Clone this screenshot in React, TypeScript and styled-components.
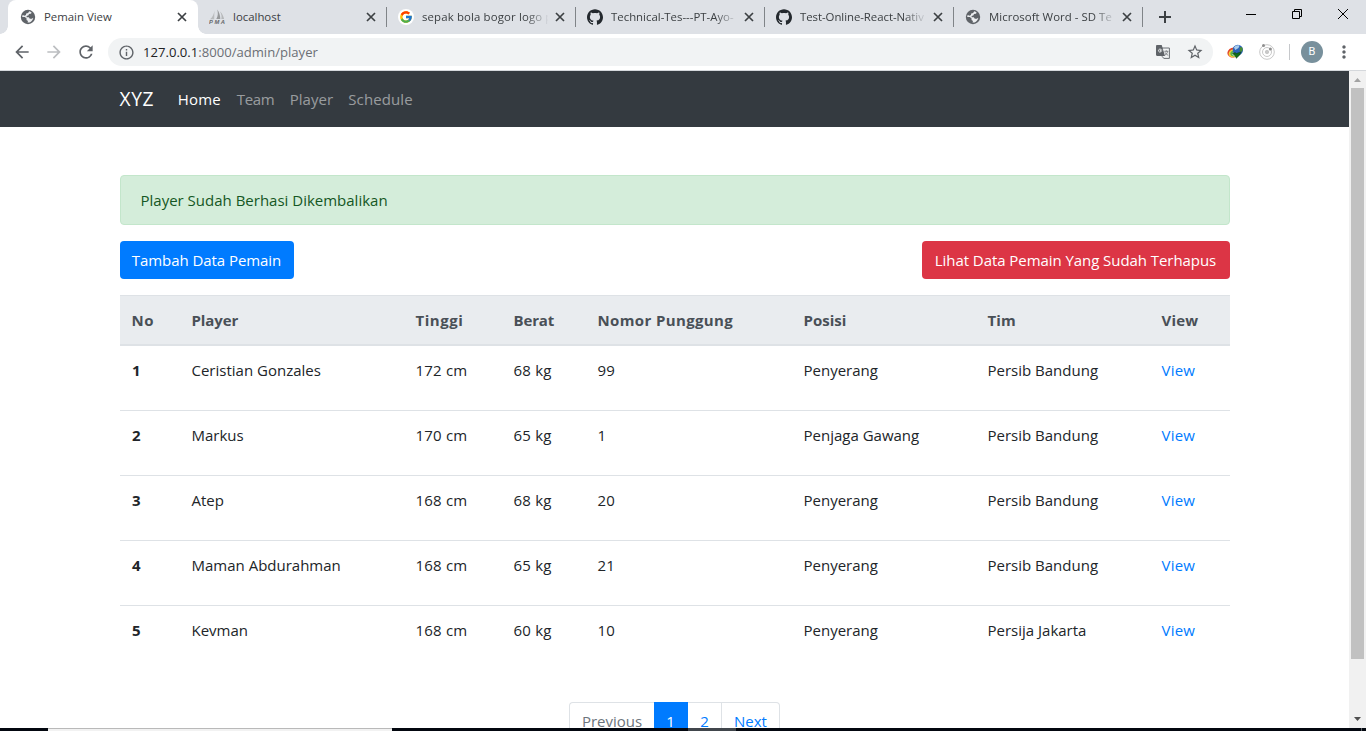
import React from 'react';
import styled, { createGlobalStyle, css } from 'styled-components';
import { MdArrowBack, MdArrowForward, MdRefresh, MdInfoOutline, MdStarBorder, MdMoreVert } from 'react-icons/md';
import { FcGoogle } from 'react-icons/fc';
import { SiGithub } from 'react-icons/si';

const GlobalStyle = createGlobalStyle`
  *, *::before, *::after { box-sizing: border-box; }
  html, body { margin: 0; overflow: hidden; background: #fff; }
  body { font-family: "Open Sans", "Noto Sans", sans-serif; font-size: 15px; line-height: 24px; color: #212529; }
  a { text-decoration: none; color: #007bff; }
  svg { display: block; flex: none; }
`;

const Screen = styled.div`
  display: flex;
  flex-direction: column;
  width: 1366px;
  height: 731px;
  overflow: hidden;
`;

/* Browser frame */
const TabStrip = styled.div`
  display: flex;
  height: 34px;
  padding-left: 8px;
  background: #dee1e6;
  flex: none;
`;

const TabBox = styled.div<{ $active?: boolean; $divider?: boolean }>`
  position: relative;
  display: flex;
  align-items: center;
  width: 189px;
  height: 34px;
  padding: 0 10px 0 12px;
  font-size: 11.4px;
  line-height: 16px;
  color: #3c4043;
  ${p => p.$active && css`
    z-index: 1;
    width: 190px;
    margin-right: -1px;
    background: #fff;
    border-radius: 8px 8px 0 0;
    &::before, &::after {
      content: "";
      position: absolute;
      bottom: 0;
      width: 8px;
      height: 8px;
    }
    &::before { left: -8px; background: radial-gradient(circle at 0 0, transparent 7.5px, #fff 8px); }
    &::after { right: -8px; background: radial-gradient(circle at 100% 0, transparent 7.5px, #fff 8px); }
  `}
  ${p => p.$divider && css`
    &::after {
      content: "";
      position: absolute;
      right: -1px;
      top: 7px;
      width: 1px;
      height: 20px;
      background: #808488;
    }
  `}
`;

const Favicon = styled.span`
  display: flex;
  width: 16px;
  height: 16px;
  flex: none;
  align-items: center;
  justify-content: center;
`;

const GoogleDisc = styled.span`
  display: flex;
  align-items: center;
  justify-content: center;
  flex: none;
  width: 16px;
  height: 16px;
  border-radius: 50%;
  background: #fff;
`;

const TabTitle = styled.span<{ $fade?: boolean; $spacing: number }>`
  flex: none;
  width: 126px;
  margin: 0 7px 0 8px;
  overflow: hidden;
  white-space: nowrap;
  letter-spacing: ${p => p.$spacing}px;
  ${p => p.$fade && css`mask-image: linear-gradient(90deg, #000 104px, transparent 127px);`}
`;

const NewTab = styled.div`
  display: flex;
  align-items: center;
  padding-left: 17px;
`;

const WindowControls = styled.div`
  display: flex;
  margin-left: auto;
  padding: 8px 17px 0 0;
  gap: 34px;
`;

const Toolbar = styled.div`
  display: flex;
  align-items: center;
  flex: none;
  height: 37px;
  padding: 0 12px;
  background: #fff;
  border-bottom: 1px solid #d5d8dc;
  color: #5f6368;
`;

const NavButtons = styled.div`
  display: flex;
  flex: none;
  gap: 12px;
  width: 96px;
`;

const AddressBar = styled.div`
  display: flex;
  align-items: center;
  flex: none;
  width: 1105px;
  height: 28px;
  padding: 0 9px 0 10px;
  border-radius: 14px;
  background: #f1f3f4;
  svg:nth-of-type(2) { margin: 0 16px 0 auto; }
`;

const Url = styled.span`
  margin-left: 8px;
  font-size: 13.1px;
  line-height: 20px;
  color: #6b6f74;
  b { font-weight: 400; color: #202124; }
`;

const Extensions = styled.div`
  display: flex;
  flex: none;
  align-items: center;
  margin-left: 13.5px;
`;

const OrbitSlot = styled.span`
  margin-left: 15.5px;
`;

const Separator = styled.span`
  width: 1px;
  height: 16px;
  margin: 0 11px 0 14px;
  background: #c6c8cb;
`;

const Avatar = styled.span`
  width: 22px;
  height: 22px;
  margin-right: 11px;
  border-radius: 50%;
  background: #78909c;
  color: #fff;
  font: 11px/22px Roboto, sans-serif;
  text-align: center;
`;

/* Page */
const Viewport = styled.div`
  display: flex;
  height: 657px;
  flex: none;
  overflow: hidden;
`;

const Page = styled.div`
  width: 1349px;
  height: 657px;
  overflow: hidden;
  background: #fff;
`;

const Navbar = styled.nav`
  display: flex;
  align-items: center;
  height: 56px;
  padding: 0 119.5px;
  background: #343a40;
`;

const Brand = styled.a`
  width: 58.3px;
  font-size: 19.2px;
  letter-spacing: 0.6px;
  line-height: 30px;
  color: #fff;
`;

const NavLink = styled.a<{ $active?: boolean; $width: number; $spacing?: number }>`
  width: ${p => p.$width}px;
  padding-bottom: 1px;
  letter-spacing: ${p => p.$spacing ?? 0}px;
  color: ${p => (p.$active ? '#fff' : 'rgba(255, 255, 255, 0.5)')};
`;

const Container = styled.main`
  width: 1110px;
  margin: 0 auto;
  padding-top: 48px;
`;

const Alert = styled.div`
  height: 50px;
  padding: 12px 20px;
  border: 1px solid #c3e6cb;
  border-radius: 4px;
  background: #d4edda;
  color: #155724;
`;

const Actions = styled.div`
  display: flex;
  justify-content: space-between;
  margin: 16px 0;
`;

const Button = styled.a<{ $color: string; $width: number }>`
  width: ${p => p.$width}px;
  height: 38px;
  padding: 7px 0;
  border-radius: 4px;
  background: ${p => p.$color};
  color: #fff;
  letter-spacing: -0.06px;
  text-align: center;
  white-space: nowrap;
`;

const Table = styled.table`
  width: 1110px;
  table-layout: fixed;
  border-collapse: separate;
  border-spacing: 0;
  text-align: left;
`;

const HeadCell = styled.th<{ $width: number; $spacing: number }>`
  width: ${p => p.$width}px;
  height: 51px;
  padding: 0 12px;
  border-top: 1px solid #dee2e6;
  border-bottom: 2px solid #dee2e6;
  background: #e9ecef;
  color: #495057;
  letter-spacing: ${p => p.$spacing}px;
  white-space: nowrap;
`;

const Row = styled.tr`
  & > * {
    height: 65px;
    padding: 12px 12px 28px;
    border-top: 1px solid #dee2e6;
    vertical-align: top;
  }
  & > th { padding-left: 12.5px; }
  &:first-child > * { height: 64px; border-top: 0; }
`;

const Cell = styled.td<{ $numeric?: boolean }>`
  letter-spacing: ${p => (p.$numeric ? 0.2 : 0)}px;
`;

const Pagination = styled.div`
  display: flex;
  width: 211px;
  margin: 32px auto 0;
`;

const PageItem = styled.a<{ $width: number; $state?: 'active' | 'disabled' }>`
  width: ${p => p.$width}px;
  height: 38px;
  padding-top: 6px;
  border: 1px solid #dee2e6;
  border-left-width: 0;
  text-align: center;
  &:first-child { border-left-width: 1px; border-radius: 4px 0 0 4px; }
  &:last-child { border-radius: 0 4px 4px 0; }
  ${p => p.$state === 'disabled' && css`color: #6c757d; border-right: 0;`}
  ${p => p.$state === 'active' && css`color: #fff; background: #007bff; border-color: #007bff;`}
`;

const Scrollbar = styled.div`
  display: flex;
  flex-direction: column;
  align-items: center;
  width: 17px;
  padding: 7px 0 7px;
  background: #f1f1f1;
`;

const Thumb = styled.div`
  width: 13px;
  height: 571px;
  margin: 6px 0 auto;
  background: #c1c1c1;
`;

/* Taskbar edge */
const Taskbar = styled.div`
  display: flex;
  flex: none;
  height: 3px;
  background: #03070f;
`;

const TaskSearch = styled.div`
  width: 344px;
  margin-left: 48px;
  border-top: 1px solid #b9b9b9;
  background: #f2f2f2;
`;

const TaskActive = styled.div`
  width: 48px;
  margin-left: 296px;
  background: #41464c;
`;

const TaskDesktop = styled.div`
  width: 1px;
  margin-left: auto;
  margin-right: 4px;
  background: #5c6066;
`;

const Globe = () => (
  <svg width="16" height="16" viewBox="0 0 16 16">
    <circle cx="8" cy="8" r="7.2" fill="#5f6368" />
    <path d="M9.200 2.300c1 .2 1.800.700 2.500 1.400l-.9 1-1.900.2-.3 1.400-1.900.6-.2 1.400h2.300l1 1.500h2l1.500-1c-.3 2.200-1.700 3.900-3.800 4.600l-2 .1.500-1.500-1.500-.9.100-1.500-1.700-1.500L2.200 8c0-.8.200-1.500.5-2.100l2 .8 1.200-.8.300-1.500 1.900-.4z" fill="#eceef0" />
  </svg>
);

const PmaSail = () => (
  <svg width="17" height="16" viewBox="0 0 17 16">
    <path d="M5.400 1.500C5 5 3.800 8 1 10.300h4.200z" fill="#b9bbbd" />
    <path d="M8.200.5c1 3.500.9 6.500-.9 9.600h4C11.300 6.500 10.200 3 8.200.5z" fill="#97999b" />
    <path d="M11 2.500c1.500 2.500 2 5 1.300 7.600h2.800C14.500 7 13.200 4.500 11 2.500z" fill="#b5b7b9" />
    <text x="0" y="15" fontFamily="Liberation Sans" fontSize="5.800" fontWeight="700" fontStyle="italic" fill="#66686a" textLength="16">PMA</text>
  </svg>
);

const Close = () => (
  <svg width="10" height="10" viewBox="0 0 10 10" stroke="#3c4043" strokeWidth="1.700">
    <path d="M1 1l8 8M9 1l-8 8" />
  </svg>
);

const Translate = () => (
  <svg width="14" height="14" viewBox="0 0 14 14">
    <path d="M6 3h7.400v10.400H8L5.500 11z" fill="#f1f3f4" stroke="#6b6f74" strokeWidth="1" />
    <path d="M0 1.200C0 .5.500 0 1.200 0h4.500l3.300 11H1.200C.5 11 0 10.500 0 9.800z" fill="#5f6368" />
    <path d="M6.300 5H4.300v1.100h1c-.2.700-.7 1-1.300 1a1.500 1.500 0 1 1 1-2.600" fill="none" stroke="#f1f3f4" strokeWidth=".9" />
    <path d="M8.300 6.300h4M10.300 5.300v1M11.700 6.400c-.5 1.800-1.500 3-2.800 3.800M9 7.300c.7 1.400 1.700 2.400 3.200 3" fill="none" stroke="#6b6f74" strokeWidth=".8" />
  </svg>
);

const DownloadGlobe = () => (
  <svg width="17" height="16" viewBox="0 0 17 16">
    <ellipse cx="6.200" cy="8.600" rx="5.800" ry="4.900" fill="#e2432c" transform="rotate(-20 6 8.800)" />
    <ellipse cx="6.500" cy="9.200" rx="5" ry="4" fill="#f5d13a" transform="rotate(-20 6.500 9.200)" />
    <ellipse cx="7" cy="9.600" rx="3.700" ry="2.900" fill="#5db548" />
    <ellipse cx="7.500" cy="10" rx="2.200" ry="1.800" fill="#e8f3e4" />
    <circle cx="10.800" cy="6" r="5.200" fill="#2c62b8" />
    <path d="M7 3.500c1.200-2 3.500-2.600 5.500-1.900L11.500 4 8.300 6z" fill="#a9cdec" />
    <path d="M13 3l2.300.5c.6 1.700.3 3.400-.6 4.600L12.500 7z" fill="#488d35" />
    <path d="M5.500 9.500 8.300 8.600l.9.900 4.800-1.600-1.200 3L9.300 14.300 8.400 12z" fill="#116d18" stroke="#073f0b" strokeWidth=".5" />
  </svg>
);

const Orbit = () => (
  <svg width="16" height="16" viewBox="0 0 16 16" fill="none" stroke="#c8c8c8">
    <circle cx="8" cy="8" r="7.300" />
    <circle cx="8" cy="8" r="4.500" />
    <circle cx="8" cy="8" r="1.700" fill="#c8c8c8" />
    <circle cx="4.500" cy="1.600" r="1.500" fill="#8e8e8e" stroke="none" />
    <circle cx="11.400" cy="5" r="1.500" fill="#8e8e8e" stroke="none" />
  </svg>
);

type TabData = { title: string; icon: React.ReactNode; spacing: number; fade?: boolean };
const tabs: TabData[] = [
  { title: 'Pemain View', icon: <Globe />, spacing: 0 },
  { title: 'localhost', icon: <PmaSail />, spacing: 0 },
  { title: 'sepak bola bogor logo p', icon: <GoogleDisc><FcGoogle size={14} /></GoogleDisc>, spacing: 0.14, fade: true },
  { title: 'Technical-Tes---PT-Ayo-', icon: <SiGithub size={16} color="#24292e" />, spacing: 0, fade: true },
  { title: 'Test-Online-React-Nativ', icon: <SiGithub size={16} color="#24292e" />, spacing: -0.05, fade: true },
  { title: 'Microsoft Word - SD Te', icon: <Globe />, spacing: 0.04, fade: true },
];

const columns: [string, number, number][] = [
  ['No', 60, 0.5], ['Player', 224, -0.1], ['Tinggi', 98, 0.55], ['Berat', 84, -0.15],
  ['Nomor Punggung', 206, 0.37], ['Posisi', 184, 0], ['Tim', 174, 0.15], ['View', 80, 0.15],
];

const players = [
  ['Ceristian Gonzales', '172 cm', '68 kg', '99', 'Penyerang', 'Persib Bandung'],
  ['Markus', '170 cm', '65 kg', '1', 'Penjaga Gawang', 'Persib Bandung'],
  ['Atep', '168 cm', '68 kg', '20', 'Penyerang', 'Persib Bandung'],
  ['Maman Abdurahman', '168 cm', '65 kg', '21', 'Penyerang', 'Persib Bandung'],
  ['Kevman', '168 cm', '60 kg', '10', 'Penyerang', 'Persija Jakarta'],
];

export default function App() {
  return (
    <Screen>
      <GlobalStyle />
      <TabStrip>
        {tabs.map((tab, i) => (
          <TabBox key={tab.title} $active={i === 0} $divider={i > 0}>
            <Favicon>{tab.icon}</Favicon>
            <TabTitle $fade={tab.fade} $spacing={tab.spacing}>{tab.title}</TabTitle>
            <Close />
          </TabBox>
        ))}
        <NewTab>
          <svg width="12" height="12" viewBox="0 0 12 12" stroke="#3c4043" strokeWidth="2"><path d="M6 0v12M0 6h12" /></svg>
        </NewTab>
        <WindowControls>
          <svg width="12" height="12" viewBox="0 0 12 12" stroke="#000"><path d="M1 6.500h10" /></svg>
          <svg width="12" height="12" viewBox="0 0 12 12" stroke="#000" fill="none"><path d="M1.500 3.500h7v7h-7zM3.500 3.500v-2h7v7h-2" /></svg>
          <svg width="12" height="12" viewBox="0 0 12 12" stroke="#000"><path d="M1 1l10 10M11 1L1 11" /></svg>
        </WindowControls>
      </TabStrip>
      <Toolbar>
        <NavButtons>
          <MdArrowBack size={20} />
          <MdArrowForward size={20} color="#bcbec1" />
          <MdRefresh size={20} />
        </NavButtons>
        <AddressBar>
          <MdInfoOutline size={17} />
          <Url><b>127.0.0.1</b>:8000/admin/player</Url>
          <Translate />
          <MdStarBorder size={18} />
        </AddressBar>
        <Extensions>
          <DownloadGlobe />
          <OrbitSlot><Orbit /></OrbitSlot>
          <Separator />
          <Avatar>B</Avatar>
          <MdMoreVert size={20} />
        </Extensions>
      </Toolbar>
      <Viewport>
        <Page>
          <Navbar>
            <Brand>XYZ</Brand>
            <NavLink $active $width={59} $spacing={0.2}>Home</NavLink>
            <NavLink $width={53} $spacing={-0.35}>Team</NavLink>
            <NavLink $width={58.5}>Player</NavLink>
            <NavLink $width={80} $spacing={0.1}>Schedule</NavLink>
          </Navbar>
          <Container>
            <Alert>Player Sudah Berhasi Dikembalikan</Alert>
            <Actions>
              <Button $color="#007bff" $width={174}>Tambah Data Pemain</Button>
              <Button $color="#dc3545" $width={308}>Lihat Data Pemain Yang Sudah Terhapus</Button>
            </Actions>
            <Table>
              <thead>
                <tr>
                  {columns.map(([label, width, spacing]) => (
                    <HeadCell key={label} $width={width} $spacing={spacing}>{label}</HeadCell>
                  ))}
                </tr>
              </thead>
              <tbody>
                {players.map((cells, i) => (
                  <Row key={cells[0]}>
                    <th>{i + 1}</th>
                    {cells.map((cell, j) => <Cell key={j} $numeric={j > 0 && j < 4}>{cell}</Cell>)}
                    <Cell $numeric><a href="#view">View</a></Cell>
                  </Row>
                ))}
              </tbody>
            </Table>
            <Pagination>
              <PageItem $width={85} $state="disabled">Previous</PageItem>
              <PageItem $width={34} $state="active">1</PageItem>
              <PageItem $width={34}>2</PageItem>
              <PageItem $width={58}>Next</PageItem>
            </Pagination>
          </Container>
        </Page>
        <Scrollbar>
          <svg width="7" height="4" viewBox="0 0 7 4"><path d="M0 4 3.500 0 7 4z" fill="#a3a3a3" /></svg>
          <Thumb />
          <svg width="7" height="4" viewBox="0 0 7 4"><path d="M0 0h7L3.500 4z" fill="#505050" /></svg>
        </Scrollbar>
      </Viewport>
      <Taskbar>
        <TaskSearch />
        <TaskActive />
        <TaskDesktop />
      </Taskbar>
    </Screen>
  );
}
